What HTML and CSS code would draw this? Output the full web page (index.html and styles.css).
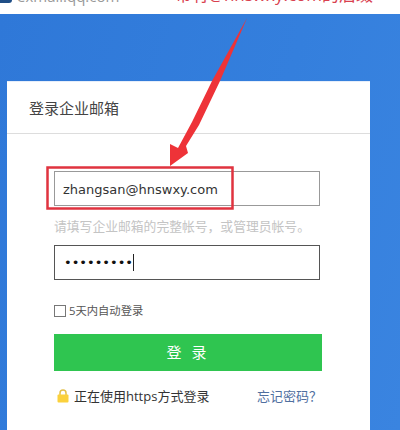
FILE: index.html
```html
<!DOCTYPE html>
<html lang="zh">
<head>
<meta charset="utf-8">
<title>登录企业邮箱</title>
<link rel="stylesheet" href="styles.css">
</head>
<body>
<div class="stage">
  <header class="topbar">
    <div class="brand"><span class="logo"></span><span class="domain">exmail.qq.com</span></div>
    <div class="note">带有@hnswxy.com的后缀</div>
  </header>
  <main class="hero">
    <section class="card">
      <h1 class="card-title">登录企业邮箱</h1>
      <form class="form">
        <div class="field field-email">zhangsan@hnswxy.com</div>
        <p class="hint">请填写企业邮箱的完整帐号，或管理员帐号。</p>
        <div class="field field-pass"><span class="dots">•••••••••</span><span class="caret"></span></div>
        <label class="remember"><span class="check"></span>5天内自动登录</label>
        <div class="submit">登 录</div>
        <div class="foot">
          <span class="secure">
            <svg class="lock" viewBox="0 0 12 14" width="12" height="14"><path d="M3 6V4a3 3 0 0 1 6 0v2" fill="none" stroke="#e3c04a" stroke-width="1.5"/><rect x="0.5" y="5.5" width="11" height="8" rx="1" fill="#fbd13c"/></svg>
            正在使用https方式登录
          </span>
          <span class="forgot">忘记密码？</span>
        </div>
      </form>
    </section>
  </main>
  <svg class="annotation" viewBox="0 0 400 430" width="400" height="430">
    <rect class="mark-box" x="47.5" y="167.5" width="185" height="41"/>
    <path class="arrow" d="M247 18 L220 81 L199 125 L186 146 L188 153 L170 166 L170 144 L178 148 L192 122 L212 81 Z"/>
  </svg>
</div>
</body>
</html>
```
FILE: styles.css
```css
* { box-sizing: border-box; }
html, body { margin: 0; padding: 0; }
body { font-family: "Open Sans", "Noto Sans CJK SC", sans-serif; color: #333; }
.stage { position: relative; width: 400px; height: 430px; overflow: hidden; display: flex; flex-direction: column; background: #347fdd; }
.topbar { height: 14px; flex: none; background: #fff; display: flex; justify-content: space-between; overflow: hidden; }
.brand { display: flex; align-items: flex-start; gap: 5px; margin-top: -11px; }
.logo { width: 12px; height: 14px; background: #1f4e86; border-radius: 0 0 3px 0; }
.domain { font-size: 15px; line-height: 14px; color: #999; }
.note { font-size: 17px; line-height: 22px; margin-top: -16px; margin-right: 27px; color: #d9414f; }
.hero { flex: 1; padding: 67px 30px 0 7px; background: linear-gradient(105deg, #2f78d8 0%, #347fdd 60%, #3a84e0 100%); }
.card { background: #fff; height: 349px; border-top: 1px solid #e6eefa; }
.card-title { margin: 0; height: 52px; border-bottom: 1px solid #ddd; padding: 0 0 0 22px; font-size: 15px; line-height: 52px; font-weight: 400; color: #444; }
.form { padding: 37px 47px 0 47px; display: flex; flex-direction: column; }
.field { width: 266px; height: 35px; border: 1px solid #999; background: #fff; padding-left: 8px; font-family: "DejaVu Sans", sans-serif; font-size: 13px; line-height: 36px; color: #333; }
.hint { margin: 12px 0 11px; font-size: 12.8px; line-height: 16px; color: #c4c4c4; white-space: nowrap; }
.field-pass { border-color: #555; display: flex; align-items: center; padding-left: 9px; }
.dots { font-size: 13px; color: #111; }
.caret { width: 1px; height: 17px; background: #222; }
.remember { margin-top: 24px; display: flex; align-items: center; gap: 3px; font-size: 11.3px; line-height: 14px; color: #555; }
.check { width: 12px; height: 12px; border: 1px solid #777; background: #fff; }
.submit { margin-top: 16px; width: 268px; height: 37px; background: #2fc550; color: #fff; text-align: center; font-size: 15px; line-height: 37px; letter-spacing: 3px; }
.foot { margin-top: 17px; width: 268px; display: flex; justify-content: space-between; align-items: center; font-size: 13px; line-height: 16px; }
.secure { display: flex; align-items: center; gap: 5px; padding-left: 3px; color: #333; }
.lock { flex: none; }
.forgot { color: #4f6f9f; }
.annotation { position: absolute; left: 0; top: 0; pointer-events: none; }
.mark-box { fill: none; stroke: #e0333f; stroke-width: 2.5; }
.arrow { fill: #ee3338; }
```
